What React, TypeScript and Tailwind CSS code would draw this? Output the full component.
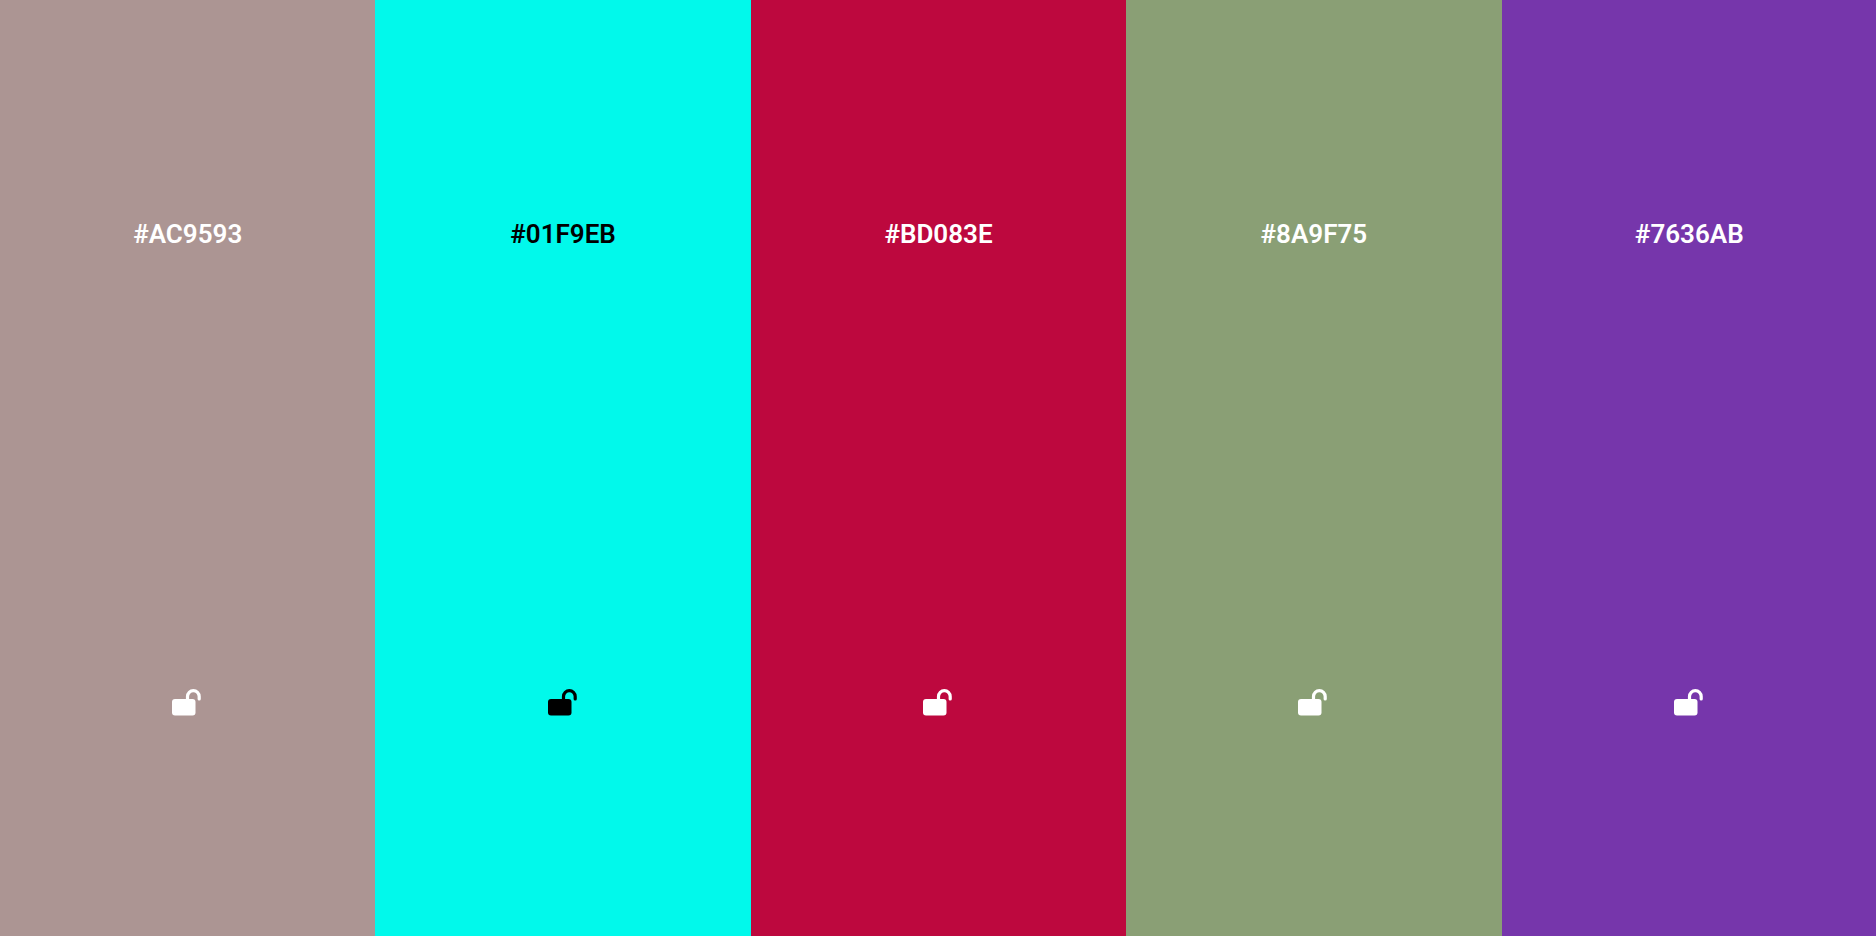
const colors = [
  { hex: '#AC9593', dark: false },
  { hex: '#01F9EB', dark: true },
  { hex: '#BD083E', dark: false },
  { hex: '#8A9F75', dark: false },
  { hex: '#7636AB', dark: false },
]

function LockOpen() {
  return (
    <svg width="30" height="27" viewBox="0 0 30 27" fill="none" className="ml-[-1px]">
      <rect x="0" y="10" width="23.5" height="16.5" rx="3" fill="currentColor" />
      <path
        d="M15.5 10 V7.5 A5.8 5.8 0 0 1 27.2 7.5 V10"
        stroke="currentColor"
        strokeWidth="3.2"
        strokeLinecap="round"
      />
    </svg>
  )
}

export default function App() {
  return (
    <div className="flex h-screen w-full overflow-hidden font-['Roboto',sans-serif]">
      {colors.map((color) => (
        <div
          key={color.hex}
          className={`grid w-[375.4px] shrink-0 grow-0 grid-rows-2 ${color.dark ? 'text-black' : 'text-white'}`}
          style={{ backgroundColor: color.hex }}
        >
          <div className="flex items-center justify-center text-[26px] font-semibold">
            {color.hex}
          </div>
          <div className="flex items-center justify-center">
            <LockOpen />
          </div>
        </div>
      ))}
    </div>
  )
}
